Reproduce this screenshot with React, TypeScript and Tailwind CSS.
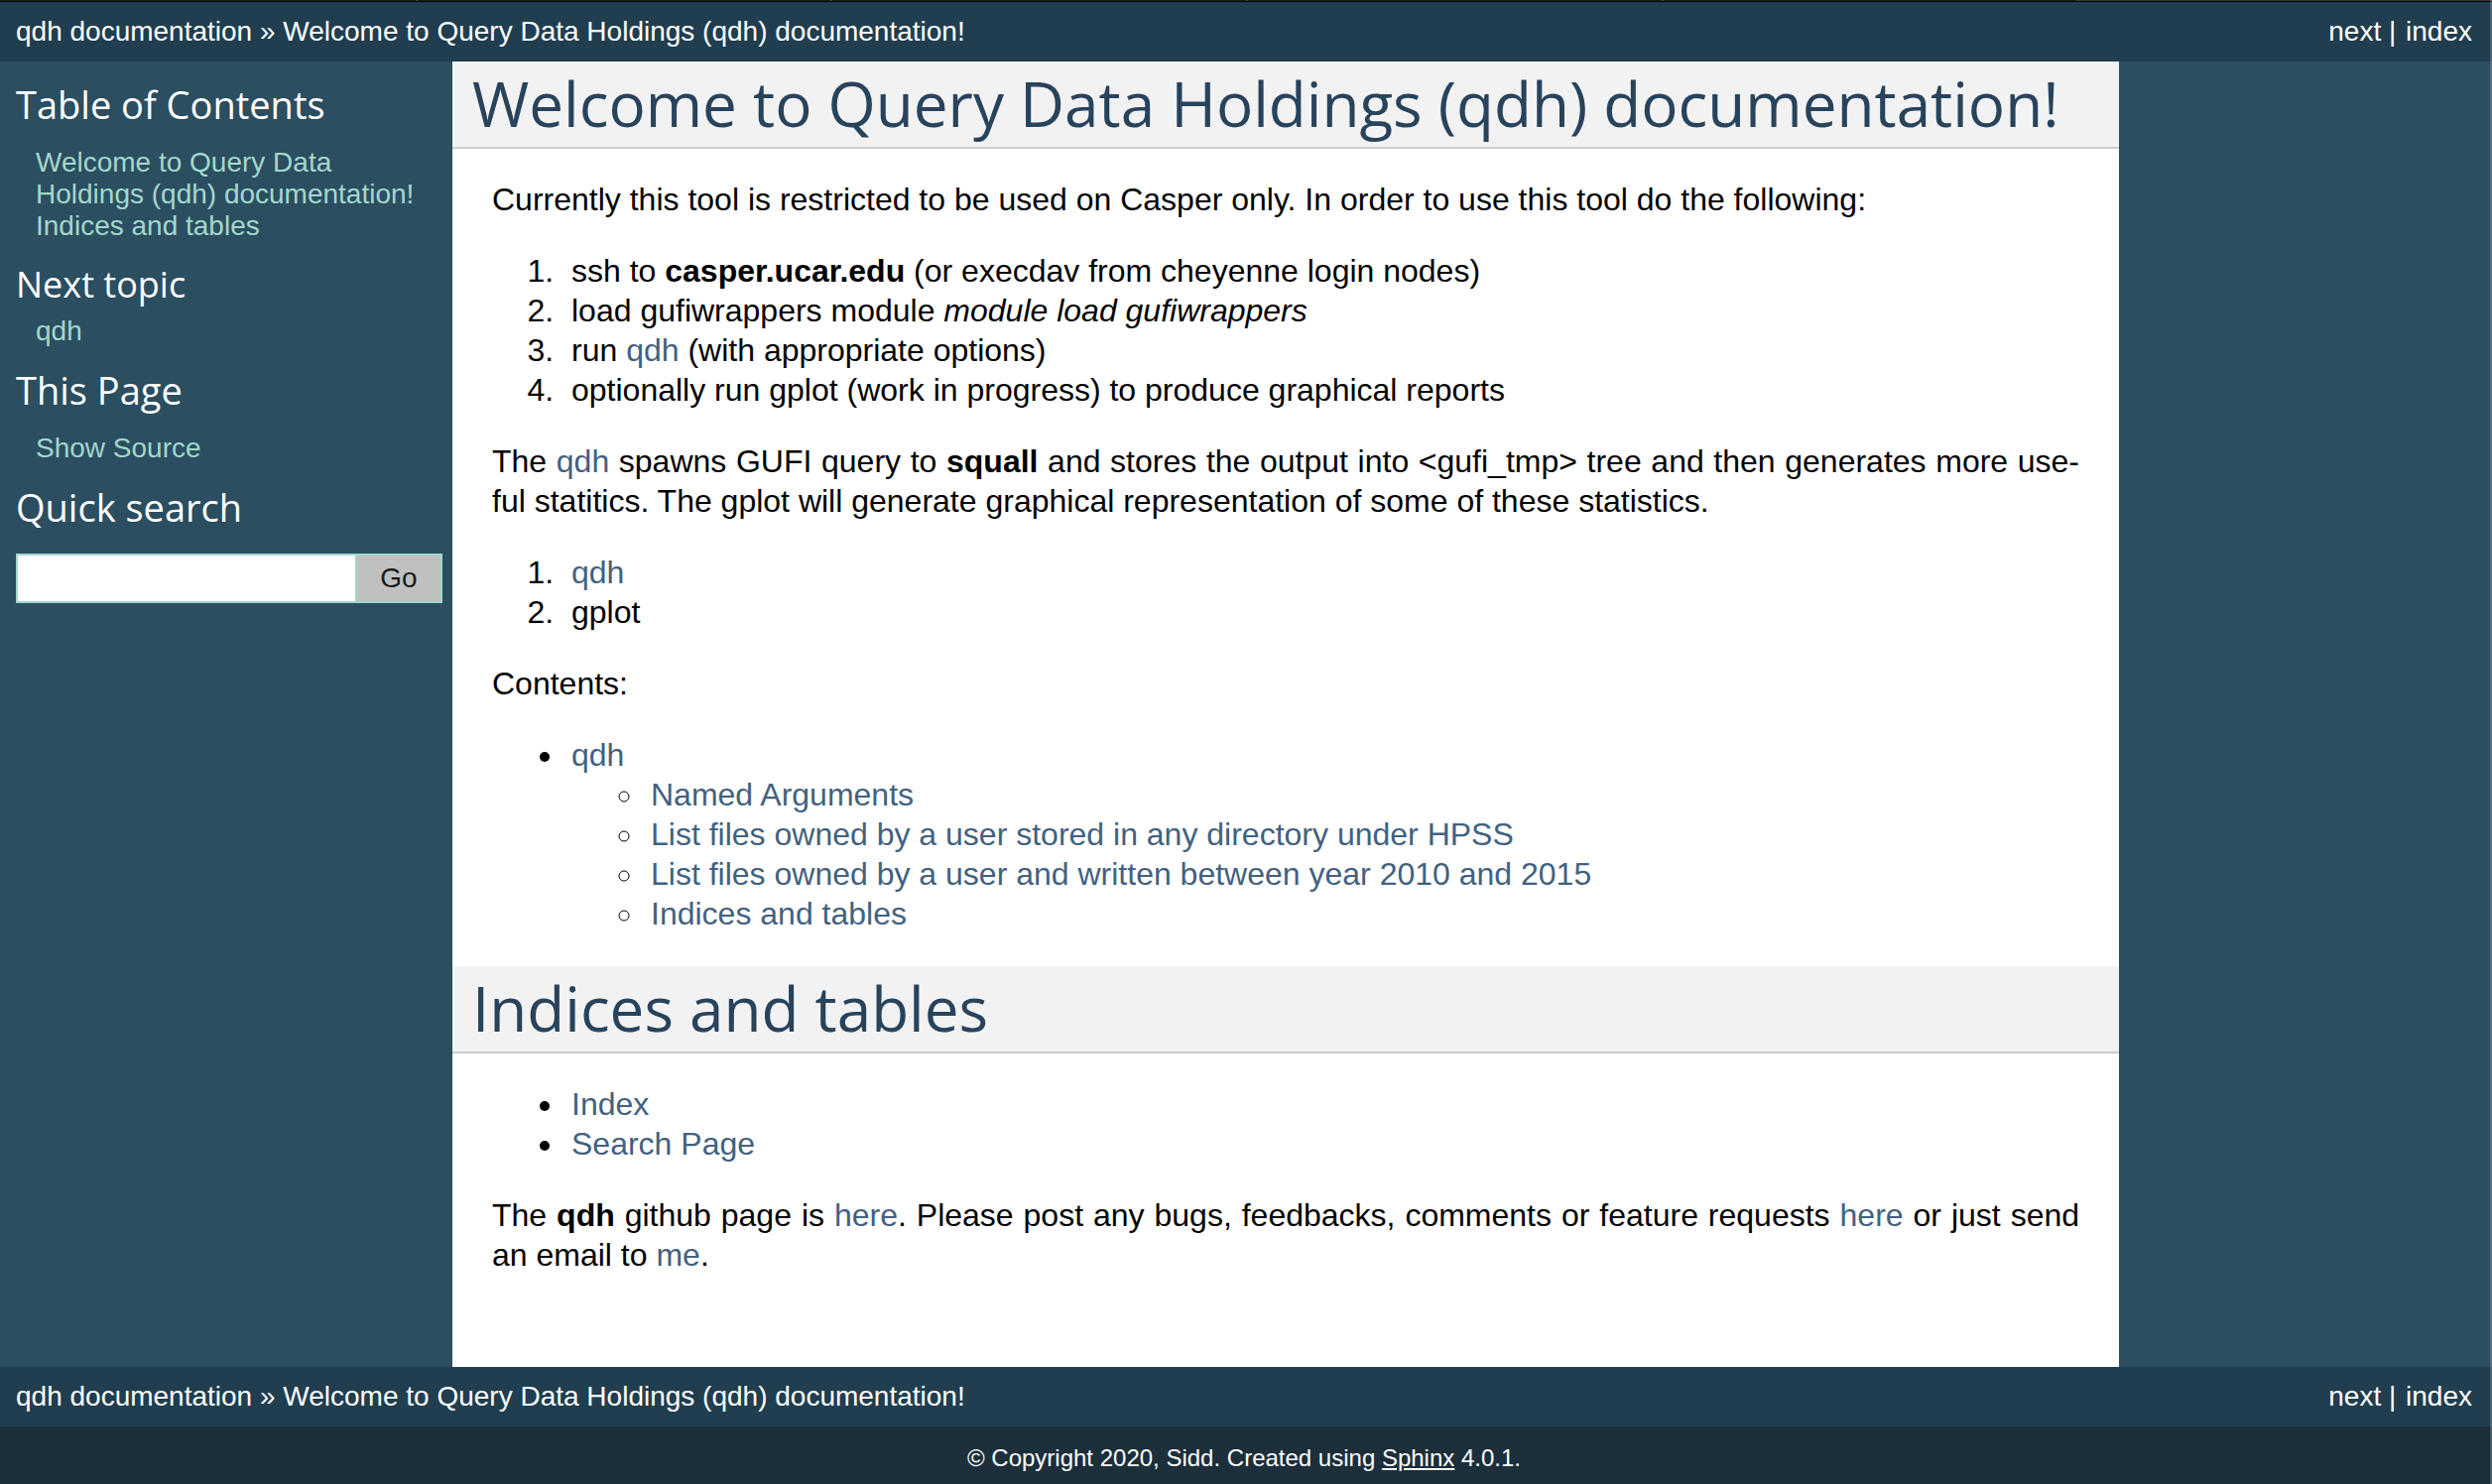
import type { ReactNode } from "react";

const TITLE = "Welcome to Query Data Holdings (qdh) documentation!";

function A({ children }: { children: ReactNode }) {
  return (
    <a href="#" className="text-[#426180] hover:underline">
      {children}
    </a>
  );
}

function TabEdges() {
  return (
    <div className="grid h-0.5 grid-cols-6 border-b border-black bg-[#1e1e1e]">
      <span />
      <span className="border-l-2 border-[#4a4a4a]" />
      <span className="border-l-2 border-[#4a4a4a]" />
      <span className="border-l-2 border-[#4a4a4a]" />
      <span className="border-l-2 border-[#4a4a4a]" />
      <span className="border-l-2 border-[#4a4a4a] bg-[#363636]" />
    </div>
  );
}

function RelBar() {
  return (
    <nav className="flex items-center justify-between bg-[#203e4f] py-2.5 pl-4 pr-5 text-[28px] leading-[40px] text-white">
      <div>
        <a href="#">qdh documentation</a> » <a href="#">{TITLE}</a>
      </div>
      <div>
        <a href="#">next</a> |{" "}
        <a href="#" className="ml-0.5">
          index
        </a>
      </div>
    </nav>
  );
}

function Heading({ children }: { children: ReactNode }) {
  return (
    <h1 className="border-b-2 border-[#cccccc] bg-[#f2f2f2] pb-0.5 pl-5 font-['Open_Sans',sans-serif] text-[62px] font-[450] leading-[84px] text-[#28435c]">
      {children}
    </h1>
  );
}

function SideHeading({ children }: { children: ReactNode }) {
  return (
    <h3 className="font-['Open_Sans',sans-serif] text-[38px] font-[450] leading-[46px] text-white">{children}</h3>
  );
}

export default function App() {
  return (
    <div className="relative flex min-h-screen flex-col bg-[#1c2f3b] font-['Liberation_Sans',Arial,sans-serif]">
      <TabEdges />
      <RelBar />
      <div className="flex bg-[#2b4e61]">
        <aside className="w-[456px] shrink-0 pl-4 pr-2.5 pt-5 text-[28px] leading-[32px] text-[#a2d8cc]">
          <SideHeading>Table of Contents</SideHeading>
          <ul className="my-5 pl-5">
            <li>
              <a href="#">{TITLE}</a>
            </li>
            <li>
              <a href="#">Indices and tables</a>
            </li>
          </ul>
          <h4 className="font-['Open_Sans',sans-serif] text-[36px] font-[450] leading-[46px] text-white">Next topic</h4>
          <p className="mb-5 mt-2 pl-5">
            <a href="#">qdh</a>
          </p>
          <SideHeading>This Page</SideHeading>
          <ul className="my-5 pl-5">
            <li>
              <a href="#">Show Source</a>
            </li>
          </ul>
          <SideHeading>
            <label htmlFor="q">Quick search</label>
          </SideHeading>
          <form className="mt-6 flex h-[50px]" onSubmit={(e) => e.preventDefault()}>
            <input
              id="q"
              type="text"
              className="min-w-0 flex-1 border-2 border-[#a2d8cc] bg-white px-2 text-black outline-none"
            />
            <button type="submit" className="w-[86px] border-2 border-l-0 border-[#a2d8cc] bg-[#c0c0c0] text-[#1a1a1a]">
              Go
            </button>
          </form>
        </aside>
        <main className="mr-[376px] flex-1 bg-white pb-[92px] text-[32px] leading-[40px] text-black">
          <Heading>{TITLE}</Heading>
          <div className="flex flex-col gap-8 px-10 pb-[33px] pt-[31px] text-justify">
            <p>Currently this tool is restricted to be used on Casper only. In order to use this tool do the following:</p>
            <ol className="list-decimal pl-[71px] *:pl-[9px]">
              <li>
                ssh to <b>casper.ucar.edu</b> (or execdav from cheyenne login nodes)
              </li>
              <li>
                load gufiwrappers module <em>module load gufiwrappers</em>
              </li>
              <li>
                run <A>qdh</A> (with appropriate options)
              </li>
              <li>optionally run gplot (work in progress) to produce graphical reports</li>
            </ol>
            <p>
              The <A>qdh</A> spawns GUFI query to <b>squall</b> and stores the output into &lt;gufi_tmp&gt; tree and
              then generates more use&shy;ful statitics. The gplot will generate graphical representation of some of
              these statistics.
            </p>
            <ol className="list-decimal pl-[71px] *:pl-[9px]">
              <li>
                <A>qdh</A>
              </li>
              <li>gplot</li>
            </ol>
            <p>Contents:</p>
            <ul className="list-disc pl-[74px] *:pl-1.5">
              <li>
                <A>qdh</A>
                <ul className="list-[circle] pl-[74px] *:pl-1.5">
                  <li>
                    <A>Named Arguments</A>
                  </li>
                  <li>
                    <A>List files owned by a user stored in any directory under HPSS</A>
                  </li>
                  <li>
                    <A>List files owned by a user and written between year 2010 and 2015</A>
                  </li>
                  <li>
                    <A>Indices and tables</A>
                  </li>
                </ul>
              </li>
            </ul>
          </div>
          <Heading>Indices and tables</Heading>
          <div className="flex flex-col gap-8 px-10 pb-px pt-[31px] text-justify">
            <ul className="list-disc pl-[74px] *:pl-1.5">
              <li>
                <A>Index</A>
              </li>
              <li>
                <A>Search Page</A>
              </li>
            </ul>
            <p>
              The <b>qdh</b> github page is <A>here</A>. Please post any bugs, feedbacks, comments or feature requests{" "}
              <A>here</A> or just send an email to <A>me</A>.
            </p>
          </div>
        </main>
      </div>
      <RelBar />
      <footer className="pr-1 pt-3 text-center text-[24px] leading-[40px] text-white">
        © Copyright 2020, Sidd. Created using{" "}
        <a href="#" className="underline underline-offset-2">
          Sphinx
        </a>{" "}
        4.0.1.
      </footer>
      <div className="pointer-events-none absolute inset-y-0 right-0 w-0.5 bg-white/20" />
    </div>
  );
}
